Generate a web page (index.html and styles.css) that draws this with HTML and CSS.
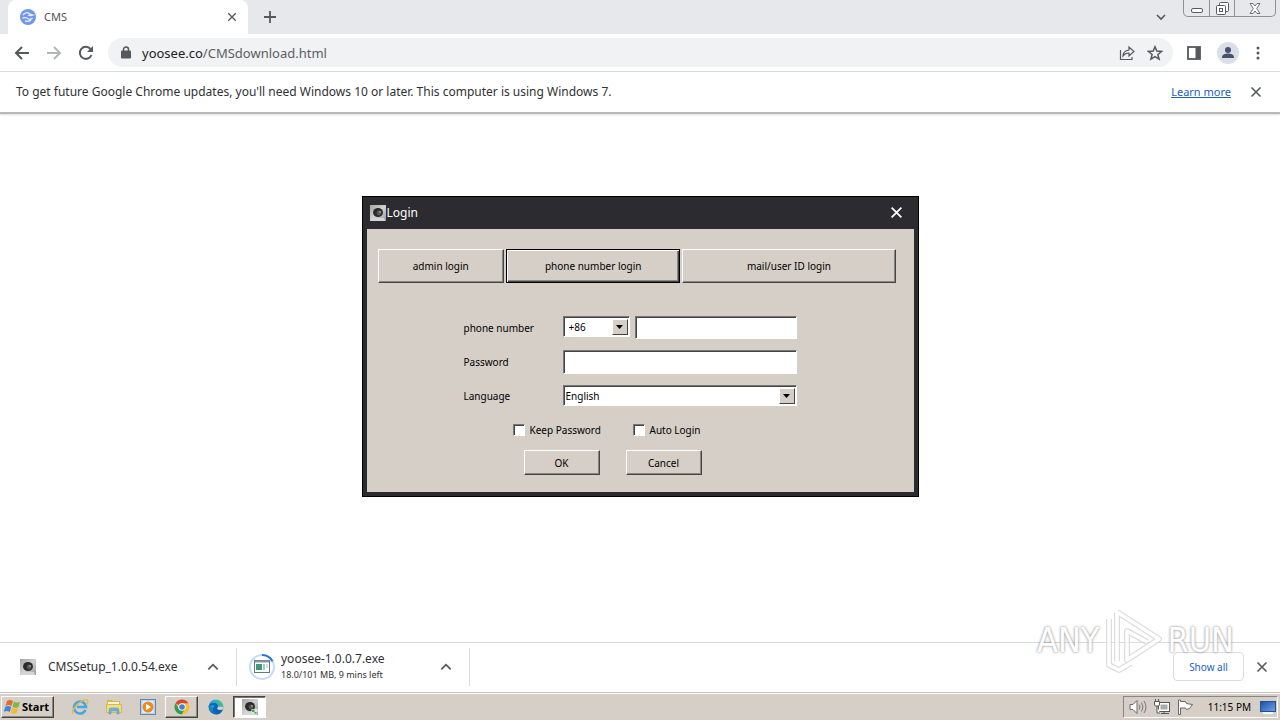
FILE: index.html
```html
<!DOCTYPE html>
<html lang="en">
<head>
<meta charset="utf-8">
<title>CMS</title>
<link rel="stylesheet" href="styles.css">
</head>
<body>
<svg class="defs" aria-hidden="true">
  <defs>
    <linearGradient id="metal" x1="0" y1="0" x2="1" y2="1"><stop offset="0" stop-color="#a4a4a4"/><stop offset=".5" stop-color="#d0d0d0"/><stop offset="1" stop-color="#9a9a9a"/></linearGradient>
    <linearGradient id="screen" x1="0" y1="0" x2="1" y2="1"><stop offset="0" stop-color="#1c4fa8"/><stop offset="1" stop-color="#6ea2e4"/></linearGradient>
    <linearGradient id="edge" x1="1" y1="0" x2="0" y2="1"><stop offset="0" stop-color="#5ad06a"/><stop offset=".5" stop-color="#1fa3d8"/><stop offset="1" stop-color="#0d5cab"/></linearGradient>
    <symbol id="cam" viewBox="0 0 16 16"><rect width="16" height="16" fill="url(#metal)"/><path d="M2 13h12l1 3H1z" fill="#d5d5d5"/><ellipse cx="8" cy="7.500" rx="5" ry="4.500" fill="#2a2a2a"/><circle cx="9" cy="8" r="2.400" fill="#555"/><circle cx="10" cy="7" r="1" fill="#999"/></symbol>
    <symbol id="x" viewBox="0 0 12 12"><path d="M1.500 1.500l9 9m0-9l-9 9" fill="none" stroke="currentColor" stroke-width="1.600"/></symbol>
    <symbol id="up" viewBox="0 0 12 12"><path d="M2 8l4-4 4 4" fill="none" stroke="currentColor" stroke-width="1.500"/></symbol>
    <symbol id="drop" viewBox="0 0 7 4"><path d="M0 0h7L3.500 4z" fill="#000"/></symbol>
  </defs>
</svg>

<header class="tabs">
  <div class="tab">
    <svg width="16" height="16" viewBox="0 0 16 16"><circle cx="8" cy="8" r="8" fill="#7197ea"/><path d="M3 6q3-4 7-1l3 1q-3 1-5 0M2.500 9q4-1 6 1 2 1 4-1M5 12q4 1 6-1" fill="none" stroke="#e4f0ff" stroke-width="1.300"/></svg>
    <span class="tab-title">CMS</span>
    <button class="icon-btn tab-close" aria-label="Close tab"><svg width="10" height="10"><use href="#x"/></svg></button>
  </div>
  <button class="icon-btn new-tab" aria-label="New tab"><svg width="12" height="12" viewBox="0 0 12 12"><path d="M6 0v12M0 6h12" stroke="currentColor" stroke-width="1.800"/></svg></button>
  <button class="icon-btn tab-search" aria-label="Search tabs"><svg width="10" height="7" viewBox="0 0 10 7"><path d="M1 1l4 4 4-4" fill="none" stroke="currentColor" stroke-width="1.600"/></svg></button>
  <div class="win-controls">
    <button aria-label="Minimize"><svg width="12" height="12" viewBox="0 0 12 12"><rect x=".5" y="6.500" width="11" height="4" rx="1.500" fill="#fff" stroke="#555b66"/></svg></button>
    <button aria-label="Restore"><svg width="13" height="13" viewBox="0 0 13 13"><rect x="3.500" y=".5" width="9" height="9" rx="1" fill="#fff" stroke="#555b66"/><rect x=".5" y="3.500" width="9" height="9" rx="1" fill="#fff" stroke="#555b66"/><rect x="3.500" y="6.500" width="3" height="3" fill="none" stroke="#555b66"/></svg></button>
    <button aria-label="Close"><svg width="12" height="11" viewBox="0 0 12 11"><path d="M1 .5h3l2 2.500 2-2.500h3L7.700 5.500 11 10.500H8L6 8l-2 2.500H1l3.300-5z" fill="#fff" stroke="#6b707a"/></svg></button>
  </div>
</header>

<nav class="toolbar">
  <button class="icon-btn" aria-label="Back"><svg width="16" height="16" viewBox="0 0 16 16"><path d="M15 8H2M8 2L2 8l6 6" fill="none" stroke="currentColor" stroke-width="2"/></svg></button>
  <button class="icon-btn dim" aria-label="Forward"><svg width="16" height="16" viewBox="0 0 16 16"><path d="M1 8h13M8 2l6 6-6 6" fill="none" stroke="currentColor" stroke-width="2"/></svg></button>
  <button class="icon-btn" aria-label="Reload"><svg width="16" height="16" viewBox="0 0 16 16"><path d="M13.500 10A6 6 0 1 1 12.500 4" fill="none" stroke="currentColor" stroke-width="2"/><path d="M15 1v6H9z" fill="currentColor"/></svg></button>
  <div class="omnibox">
    <svg width="10" height="13" viewBox="0 0 10 13"><rect y="4.500" width="10" height="8" rx="1" fill="#55585c"/><path d="M2.500 5V3.500a2.500 2.500 0 0 1 5 0V5" fill="none" stroke="#55585c" stroke-width="1.500"/></svg>
    <span class="url"><b>yoosee.co</b>/CMSdownload.html</span>
    <button class="icon-btn" aria-label="Share"><svg width="16" height="16" viewBox="0 0 16 16"><path d="M1.500 5v9.500H13V12M4 11q0-5 6-6V2l5 4.500L10 11V8q-4 0-6 3z" fill="none" stroke="currentColor" stroke-width="1.200"/></svg></button>
    <button class="icon-btn star" aria-label="Bookmark"><svg width="16" height="16" viewBox="0 0 16 16"><path d="M8 1.800l1.800 4.300 4.700.4-3.600 3 1.200 4.600L8 11.700l-4.100 2.400 1.200-4.600-3.600-3 4.700-.4z" fill="none" stroke="currentColor" stroke-width="1.500"/></svg></button>
  </div>
  <button class="icon-btn" aria-label="Side panel"><svg width="14" height="14" viewBox="0 0 14 14"><rect x="1" y="1" width="12" height="12" fill="none" stroke="currentColor" stroke-width="1.800"/><path d="M8.500 1H13v12H8.500z" fill="currentColor"/></svg></button>
  <button class="icon-btn" aria-label="Profile"><svg width="22" height="22" viewBox="0 0 22 22"><circle cx="11" cy="11" r="11" fill="#dadfe7"/><circle cx="11" cy="8" r="3" fill="#46516f"/><path d="M5 16v-1.500q1-3 6-3t6 3V16z" fill="#46516f"/></svg></button>
  <button class="icon-btn" aria-label="Menu"><svg width="4" height="14" viewBox="0 0 4 14"><g fill="currentColor"><circle cx="2" cy="2" r="1.500"/><circle cx="2" cy="7" r="1.500"/><circle cx="2" cy="12" r="1.500"/></g></svg></button>
</nav>

<div class="infobar">
  <span class="info-text">To get future Google Chrome updates, you'll need Windows 10 or later. This computer is using Windows 7.</span>
  <a href="#">Learn more</a>
  <button class="icon-btn" aria-label="Dismiss"><svg width="12" height="12"><use href="#x"/></svg></button>
</div>

<main class="page">
  <section class="dialog" aria-label="Login">
    <div class="dialog-head">
      <svg width="16" height="16"><use href="#cam"/></svg>
      <span class="dialog-title">Login</span>
      <button class="icon-btn" aria-label="Close dialog"><svg width="13" height="13"><use href="#x"/></svg></button>
    </div>
    <form class="dialog-body">
      <div class="modes">
        <button type="button" class="btn">admin login</button>
        <button type="button" class="btn current">phone number login</button>
        <button type="button" class="btn">mail/user ID login</button>
      </div>
      <div class="fields">
        <label for="phone">phone number</label>
        <div class="phone-row">
          <span class="combo code"><select aria-label="Country code"><option>+86</option></select><span class="arrow"><svg width="7" height="4"><use href="#drop"/></svg></span></span>
          <input class="text" id="phone" type="text">
        </div>
        <label for="password">Password</label>
        <input class="text" id="password" type="password">
        <label for="language">Language</label>
        <span class="combo"><select id="language"><option>English</option></select><span class="arrow"><svg width="7" height="4"><use href="#drop"/></svg></span></span>
      </div>
      <div class="checks">
        <label><input type="checkbox">Keep Password</label>
        <label><input type="checkbox">Auto Login</label>
      </div>
      <div class="actions">
        <button type="button" class="btn">OK</button>
        <button type="button" class="btn">Cancel</button>
      </div>
    </form>
  </section>
</main>

<section class="downloads">
  <div class="download">
    <svg class="file-icon" width="16" height="16"><use href="#cam"/></svg>
    <span class="file-name">CMSSetup_1.0.0.54.exe</span>
    <button class="icon-btn" aria-label="Options for CMSSetup"><svg width="14" height="14"><use href="#up"/></svg></button>
  </div>
  <div class="download second">
    <svg width="26" height="26" viewBox="0 0 26 26"><circle cx="13" cy="13" r="12" fill="none" stroke="#c6dafb" stroke-width="2"/><path d="M13 1a12 12 0 0 1 10.500 6.200" fill="none" stroke="#2b73e0" stroke-width="2"/><rect x="5.500" y="6.500" width="15" height="12" fill="#fff" stroke="#6c7480"/><path d="M6 7.500h14" stroke="#8c97a5" stroke-width="2"/><path d="M7 10h6v6H7z" fill="#3e9a76"/><path d="M14 10h2v6h-2z" fill="#9dcdb8"/><path d="M17 10h2v4h-2z" fill="#d4dae0"/></svg>
    <div class="file-info"><span class="file-name">yoosee-1.0.0.7.exe</span><span class="file-status">18.0/101 MB, 9 mins left</span></div>
    <button class="icon-btn" aria-label="Options for yoosee"><svg width="14" height="14"><use href="#up"/></svg></button>
  </div>
  <button class="show-all">Show all</button>
  <button class="icon-btn" aria-label="Close downloads"><svg width="12" height="12"><use href="#x"/></svg></button>
</section>

<footer class="taskbar">
  <button class="start"><svg width="17" height="16" viewBox="0 0 17 16"><path d="M3 2q3-2 6 0L7.500 7q-3-2-6 0z" fill="#e8692c"/><path d="M10 2.500q3 2 6 0L14.500 8q-3 1.500-6 0z" fill="#7fb743"/><path d="M1.200 8q3-2 6 0L5.700 13q-3-2-6 0z" fill="#3f86d6"/><path d="M8.200 9q3 1.500 6 0L12.700 14q-3 1.500-6 0z" fill="#f3bc2e"/></svg>Start</button>
  <div class="tasks">
    <button class="task" aria-label="Internet Explorer"><svg width="18" height="18" viewBox="0 0 18 18"><path d="M14.500 12A6 6 0 1 1 15 9H6" fill="none" stroke="#48a6e0" stroke-width="2.600"/><path d="M2 16Q0 13 6 7t10-5q2 1-.5 5" fill="none" stroke="#e5b94a" stroke-width="1.400"/></svg></button>
    <button class="task" aria-label="Explorer"><svg width="18" height="18" viewBox="0 0 18 18"><path d="M2 2h5l1 1h7v9H2z" fill="#dfb545"/><path d="M3 4h11v3H3z" fill="#fff6cf"/><path d="M1.500 6.500h15v8h-15z" fill="#f4dc83" stroke="#d8b654"/><path d="M4 16v-4q0-2 2-2h6q2 0 2 2v4h-2v-3H6v3z" fill="#6db3dd" stroke="#4c97c6" stroke-width=".5"/></svg></button>
    <button class="task" aria-label="Media Player"><svg width="18" height="18" viewBox="0 0 18 18"><rect x="1.500" y="1.500" width="15" height="15" fill="#b8d3ee" stroke="#5689bd"/><rect x="3.500" y="3" width="11" height="12" fill="#e3eefa"/><circle cx="9" cy="9" r="5.500" fill="#f08a1d"/><path d="M7 5.800v6.400L12 9z" fill="#fff"/></svg></button>
    <button class="task raised" aria-label="Chrome"><svg width="16" height="16" viewBox="0 0 16 16"><circle cx="8" cy="8" r="7.500" fill="#f4c22b"/><path d="M8 8L1.500 4.200A7.500 7.500 0 0 1 14.500 4.300H8z" fill="#dd4436"/><path d="M1.500 4.200A7.500 7.500 0 0 0 7.500 15.500L11.200 9.800 8 8l-3 2z" fill="#2f9e50"/><circle cx="8" cy="8" r="3.700" fill="#fff"/><circle cx="8" cy="8" r="2.800" fill="#3f7fe8"/></svg></button>
    <button class="task" aria-label="Edge"><svg width="16" height="16" viewBox="0 0 16 16"><circle cx="8" cy="8" r="7.500" fill="url(#edge)"/><path d="M.5 8q1-4 5.500-4 4 0 4 3.500 0 1-1 2 1 2 5.500 1.500Q13 15 8.500 15.500 5 14 5 11t2-4Q3 4.500.5 8z" fill="#0e62b4"/><path d="M9 9.500q1-1 1-2l5.500.5q0 2.500-2.500 3-3 0-4-1.500z" fill="#d5d0c8"/></svg></button>
    <button class="task pressed" aria-label="CMS"><svg width="16" height="16" viewBox="0 0 16 16"><use href="#cam" width="16" height="16"/><path d="M9.500 10h6v3q-1 2-3 3-2-1-3-3z" fill="#dfe9df"/><path d="M10 10.500h2.500V13H10zm2.500 2.500H15l-2.500 2.500z" fill="#4ba35f"/></svg></button>
  </div>
  <div class="tray">
    <svg width="18" height="16" viewBox="0 0 18 16"><path d="M1 5.500h3l4-4v13l-4-4H1z" fill="#fff" stroke="#6a6a6a"/><path d="M10 5.500q2 2.500 0 5M12.500 3.500q3 4.500 0 9M15 2q4 6 0 12" fill="none" stroke="#777"/></svg>
    <svg width="16" height="16" viewBox="0 0 16 16"><rect x="4.500" y="3.500" width="11" height="9" fill="#fff" stroke="#555"/><rect x="6.500" y="5.500" width="7" height="5" fill="#aaa"/><path d="M7 14.500h8M10 12.500v2" stroke="#555"/><path d="M.5 2.500h5V6l-1 1h-3l-1-1zM1.500 0v2m3-2v2M3 7v7h3" fill="#fff" stroke="#555"/></svg>
    <svg width="17" height="16" viewBox="0 0 17 16"><path d="M1.500 1v14.500h2V9h5l1 1.500q3 .5 6-5l-6-1-1-2h-5V1z" fill="#fff" stroke="#666"/></svg>
    <span class="clock">11:15 PM</span>
    <svg width="16" height="13" viewBox="0 0 16 13"><rect x=".5" y=".5" width="15" height="10" fill="url(#screen)" stroke="#23508f"/><path d="M3 12h10" stroke="#f4f7fb" stroke-width="2"/></svg>
  </div>
</footer>

<div class="watermark" aria-hidden="true">
  <span>ANY</span>
  <svg width="60" height="66" viewBox="0 0 60 66"><g fill="none" stroke-linejoin="round"><path d="M14 6v48M6 12v46l10 5 12-7M14 5l42 27-32 21V24l20 11" stroke="#d6d6d6" stroke-width="6"/><path d="M14 6v48M6 12v46l10 5 12-7M14 5l42 27-32 21V24l20 11" stroke="#fff" stroke-width="3.500"/></g></svg>
  <span>RUN</span>
</div>
</body>
</html>
```
FILE: styles.css
```css
* { box-sizing: border-box; }
body {
  margin: 0;
  min-height: 100vh;
  display: flex;
  flex-direction: column;
  position: relative;
  background: #fff;
  color: #303134;
  font: 12px/16px "Noto Sans", sans-serif;
}
button, input, select { font: inherit; color: inherit; margin: 0; }
button { padding: 0; }
svg { display: block; flex: none; }
.defs { position: absolute; width: 0; height: 0; }
.icon-btn { border: 0; background: none; color: #55585c; display: flex; align-items: center; justify-content: center; flex: none; }

/* Tab strip */
.tabs { display: flex; align-items: center; height: 34px; background: #e6e8eb; }
.tab { display: flex; align-items: center; gap: 8px; width: 240px; height: 34px; margin-left: 8px; padding: 0 11px 0 12px; background: #fff; border-radius: 8px 8px 0 0; }
.tab-title { flex: 1; font-size: 11px; color: #505357; }
.new-tab { margin-left: 16px; }
.tab-search { margin-left: auto; margin-right: 17px; }
.win-controls { display: flex; align-self: flex-start; height: 17px; margin-right: 4px; border: 1px solid #8d9196; border-top: 0; border-radius: 0 0 5px 5px; }
.win-controls button { display: flex; align-items: center; justify-content: center; width: 25px; border: 0; background: none; }
.win-controls button + button { border-left: 1px solid #8d9196; }
.win-controls button:last-child { width: 41px; }

/* Toolbar */
.toolbar { display: flex; align-items: center; gap: 16px; height: 38px; padding: 0 20px 0 14px; border-bottom: 1px solid #d9dbde; }
.toolbar .dim { color: #b4b6b9; }
.omnibox { flex: 1; display: flex; align-items: center; gap: 11px; height: 29px; margin: 0 -2px; padding: 0 10px 0 13px; border-radius: 15px; background: #f0f2f4; }
.url { flex: 1; font-size: 13px; line-height: 18px; color: #5b5e62; }
.url b { font-weight: 400; color: #202124; }
.omnibox .star { margin-left: 5px; }
.toolbar .icon-btn:last-child { margin-left: 1px; }

/* Notice under the toolbar */
.infobar { display: flex; align-items: center; height: 42px; padding: 0 18px 0 16px; border-bottom: 2px solid #b9b9b9; box-shadow: 0 1px 2px #ddd; }
.info-text { flex: 1; }
.infobar a { margin-right: 19px; font-size: 11px; color: #1a62b8; text-decoration: underline; }

/* Page and login window */
.page { flex: 1; padding-top: 82px; }
.dialog { width: 557px; max-width: 100%; margin: 0 auto; padding: 0 4px 4px; border: 1px solid #000; background: #2b2b30; color: #000; font-size: 10px; line-height: 14px; }
.dialog-head { display: flex; align-items: center; gap: 1px; height: 32px; padding: 0 11px 1px 3px; color: #fff; }
.dialog-title { flex: 1; font-size: 12px; line-height: 16px; }
.dialog-head .icon-btn { color: #fff; }
.dialog-body { background: #d5cfc8; padding: 20px 18px 17px 11px; }
.btn { background: #d5cfc8; border: 1px solid; border-color: #fff #444 #444 #fff; box-shadow: inset -1px -1px #8a8680; }
.btn.current { border-color: #000; box-shadow: inset 1px 1px #fff, inset -1px -1px #444, inset -2px -2px #8a8680; }
.modes { display: grid; grid-template-columns: 127fr 175fr 214fr; gap: 2px; }
.modes .btn { height: 34px; }
.fields { display: grid; grid-template-columns: 99px 234px; row-gap: 11px; align-items: center; margin: 33px 0 0 86px; }
.phone-row { display: flex; align-items: flex-start; gap: 5px; }
.text { width: 100%; min-width: 0; height: 24px; padding: 2px 4px; border: 1px solid; border-color: #777 #fff #fff #777; box-shadow: inset 1px 1px #444; background: #fff; border-radius: 0; }
.phone-row .text { flex: 1; height: 23px; }
.combo { display: flex; height: 21px; border: 1px solid; border-color: #777 #fff #fff #777; box-shadow: inset 1px 1px #444; background: #fff; padding: 2px 1px 1px 2px; }
.combo.code { width: 67px; }
.combo select { flex: 1; min-width: 0; appearance: none; border: 0; background: #fff; padding: 0; line-height: 16px; }
.combo.code select { padding-left: 3px; }
.arrow { display: flex; align-items: center; justify-content: center; width: 16px; background: #d5cfc8; border: 1px solid; border-color: #fff #444 #444 #fff; pointer-events: none; }
.checks { display: flex; margin: 17px 0 0 135px; }
.checks label { display: flex; align-items: center; gap: 5px; width: 120px; }
.checks input { appearance: none; width: 12px; height: 12px; background: #fff; border: 1px solid; border-color: #777 #fff #fff #777; box-shadow: inset 1px 1px #444; }
.actions { display: flex; gap: 26px; margin: 13px 0 0 146px; }
.actions .btn { width: 76px; height: 25px; }

/* Downloads shelf */
.downloads { display: flex; align-items: center; height: 50px; padding: 0 12px 2px 0; border-top: 1px solid #d9dbde; }
.download { display: flex; align-items: center; width: 237px; height: 38px; padding: 0 16px 0 20px; border-right: 1px solid #d9dbde; }
.download.second { width: 233px; padding: 0 16px 0 12px; }
.file-icon { margin-right: 12px; }
.file-name { flex: 1; }
.file-info { flex: 1; display: flex; flex-direction: column; margin-left: 6px; }
.file-status { font-size: 9px; }
.show-all { margin-left: auto; margin-right: 12px; width: 71px; height: 29px; border: 1px solid #dadce0; border-radius: 4px; background: #fff; color: #1a62c8; font-size: 10px; }

/* Taskbar */
.taskbar { display: flex; align-items: center; height: 28px; padding: 1px 2px 0 1px; border-top: 1px solid #c5c0b9; background: #d5cfc8; color: #000; box-shadow: inset 0 1px #fff; }
.start { display: flex; align-items: center; gap: 1px; width: 53px; height: 22px; border: 1px solid; border-color: #fff #444 #444 #fff; box-shadow: inset -1px -1px #8a8680; background: #d5cfc8; padding-left: 2px; font-size: 11px; font-weight: 700; }
.tasks { flex: 1; display: flex; gap: 1px; margin-left: 9px; }
.task { display: flex; align-items: center; justify-content: center; width: 33px; height: 22px; border: 1px solid transparent; background: none; }
.task.raised { border-color: #fff #444 #444 #fff; box-shadow: inset -1px -1px #8a8680; }
.task.pressed { border-color: #444 #fff #fff #444; box-shadow: inset 1px 1px #777; background: #fff; }
.tray { display: flex; align-items: center; gap: 7px; height: 22px; padding: 0 1px 0 5px; border: 1px solid; border-color: #8a8680 #fff #fff #8a8680; }
.clock { margin: 0 2px 0 7px; font-size: 10px; }

/* Corner mark laid over the page */
.watermark { position: absolute; right: 46px; bottom: 47px; display: flex; align-items: center; gap: 4px; font: 34px/40px "DejaVu Sans Condensed", "DejaVu Sans", sans-serif; color: #fff; text-shadow: 0 0 3px #888, 0 0 2px #aaa; opacity: .8; pointer-events: none; }
```
